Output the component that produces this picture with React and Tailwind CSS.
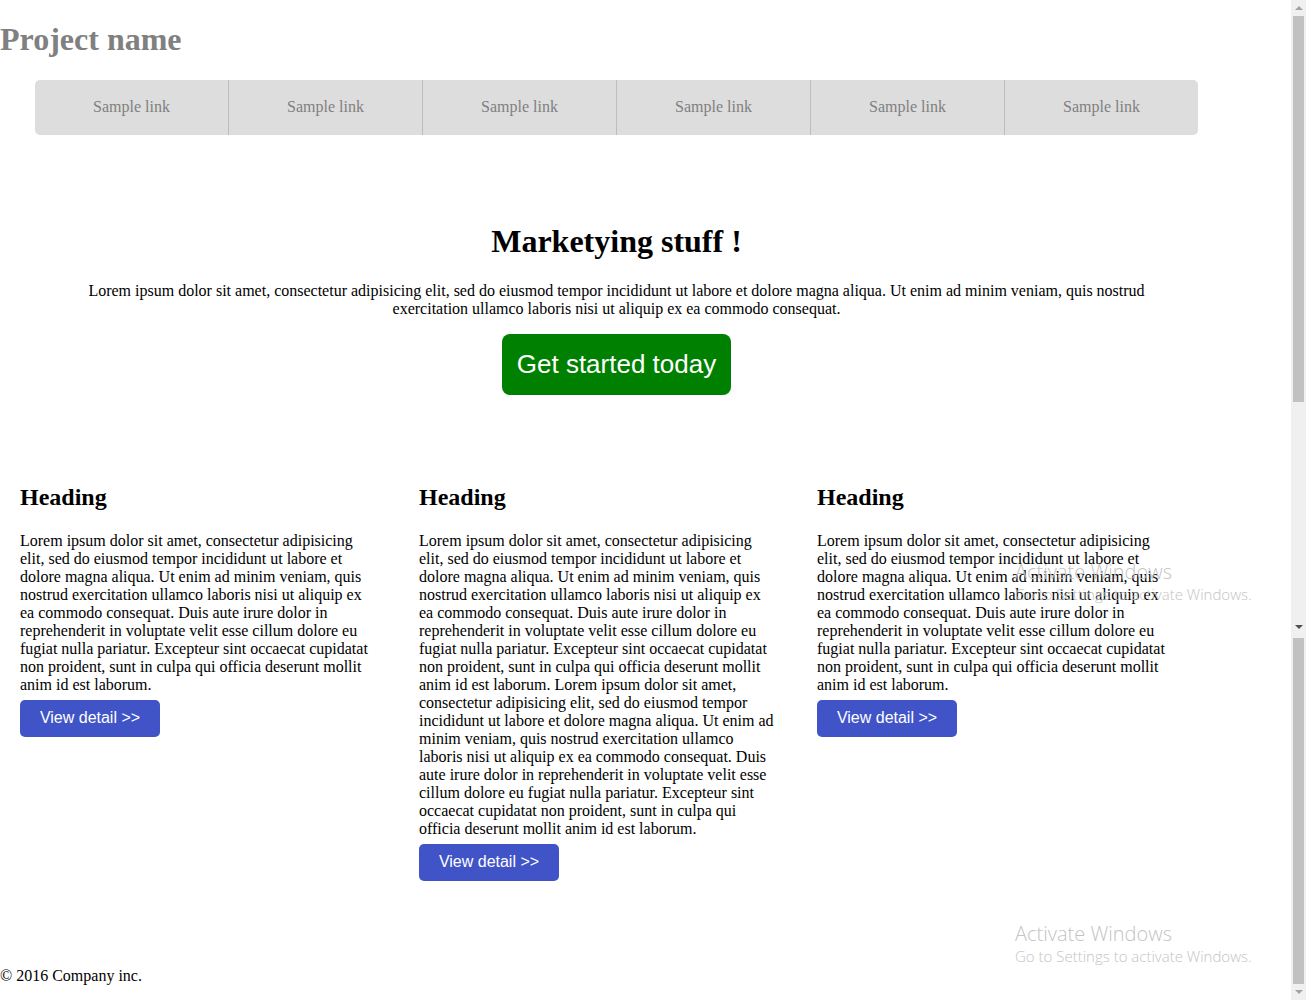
const lorem =
  'Lorem ipsum dolor sit amet, consectetur adipisicing elit, sed do eiusmod tempor incididunt ut labore et dolore magna aliqua. Ut enim ad minim veniam, quis nostrud exercitation ullamco laboris nisi ut aliquip ex ea commodo consequat. Duis aute irure dolor in reprehenderit in voluptate velit esse cillum dolore eu fugiat nulla pariatur. Excepteur sint occaecat cupidatat non proident, sunt in culpa qui officia deserunt mollit anim id est laborum.'

const links = Array.from({ length: 6 }, () => 'Sample link')

function Column({ text, width }) {
  return (
    <div className={width}>
      <h2 className="text-[24px] font-bold leading-[27.6px] mt-[20px] mb-[20px]">Heading</h2>
      <p className="w-[357px] text-[16px] leading-[18px]">{text}</p>
      <button className="mt-[6px] w-[140px] h-[37px] rounded-[5px] bg-[#4054c8] text-white text-[16px] font-['Liberation_Sans',Arial,sans-serif]">
        View detail &gt;&gt;
      </button>
    </div>
  )
}

// windows watermark from the original capture
function Watermark({ top }) {
  return (
    <div
      className={`absolute left-[1015px] ${top} text-[#c4c4c4] font-['Open_Sans','Noto_Sans',sans-serif] font-light pointer-events-none`}
    >
      <div className="text-[20px] leading-[26px]">Activate Windows</div>
      <div className="text-[15px] leading-[18px]">Go to Settings to activate Windows.</div>
    </div>
  )
}

function ScrollBar() {
  return (
    <div className="w-[15px] h-[1000px] bg-[#f0f0f0] flex flex-col items-center">
      <div className="h-[16px] w-full flex items-center justify-center">
        <div className="w-0 h-0 border-l-[4px] border-r-[4px] border-b-[4px] border-l-transparent border-r-transparent border-b-[#a3a3a3]" />
      </div>
      <div className="w-[11px] h-[386px] bg-[#c1c1c1]" />
      <div className="flex-1" />
      <div className="h-[16px] w-full flex items-center justify-center">
        <div className="w-0 h-0 border-l-[4px] border-r-[4px] border-t-[4px] border-l-transparent border-r-transparent border-t-[#505050]" />
      </div>
      <div className="w-[11px] h-[346px] mt-[3px] bg-[#c1c1c1]" />
      <div className="h-[16px] w-full flex items-center justify-center">
        <div className="w-0 h-0 border-l-[4px] border-r-[4px] border-t-[4px] border-l-transparent border-r-transparent border-t-[#a3a3a3]" />
      </div>
    </div>
  )
}

export default function App() {
  return (
    <div className="relative flex bg-white h-[1000px] overflow-hidden font-['Liberation_Serif','Times_New_Roman',serif] text-black">
      <div className="w-[1291px]">
        <h1 className="text-[32px] font-bold leading-[36.8px] text-[#808080] mt-[21.44px] mb-[21.44px]">
          Project name
        </h1>

        <nav className="ml-[35px] w-[1163px] h-[55px] bg-[#dddddd] rounded-[5px] flex">
          {links.map((l, i) => (
            <a
              key={i}
              className={`flex-1 flex items-center justify-center text-[16px] text-[#808080] ${i > 0 ? 'border-l border-[#bdbdbd]' : ''}`}
            >
              {l}
            </a>
          ))}
        </nav>

        <section className="w-[1233px] text-center pt-[88px]">
          <h1 className="text-[32px] font-bold leading-[36.8px]">Marketying stuff !</h1>
          <p className="mt-[22.6px] mx-auto w-[1100px] text-[16px] leading-[18px]">
            Lorem ipsum dolor sit amet, consectetur adipisicing elit, sed do eiusmod tempor incididunt ut labore et dolore magna aliqua. Ut enim ad minim veniam, quis nostrud exercitation ullamco laboris nisi ut aliquip ex ea commodo consequat.
          </p>
          <button className="mt-[16px] w-[229px] h-[61px] rounded-[8px] bg-[#008000] text-white text-[26px] font-['Liberation_Sans',Arial,sans-serif]">
            Get started today
          </button>
        </section>

        <section className="flex pl-[20px] mt-[69px]">
          <Column text={lorem} width="w-[399px]" />
          <Column
            text={
              lorem +
              ' Lorem ipsum dolor sit amet, consectetur adipisicing elit, sed do eiusmod tempor incididunt ut labore et dolore magna aliqua. Ut enim ad minim veniam, quis nostrud exercitation ullamco laboris nisi ut aliquip ex ea commodo consequat. Duis aute irure dolor in reprehenderit in voluptate velit esse cillum dolore eu fugiat nulla pariatur. Excepteur sint occaecat cupidatat non proident, sunt in culpa qui officia deserunt mollit anim id est laborum.'
            }
            width="w-[398px]"
          />
          <Column text={lorem} width="w-[398px]" />
        </section>

        <footer className="mt-[86px] text-[16px] leading-[18px]">© 2016 Company inc.</footer>
      </div>
      <ScrollBar />
      <Watermark top="top-[559px]" />
      <Watermark top="top-[921px]" />
    </div>
  )
}
